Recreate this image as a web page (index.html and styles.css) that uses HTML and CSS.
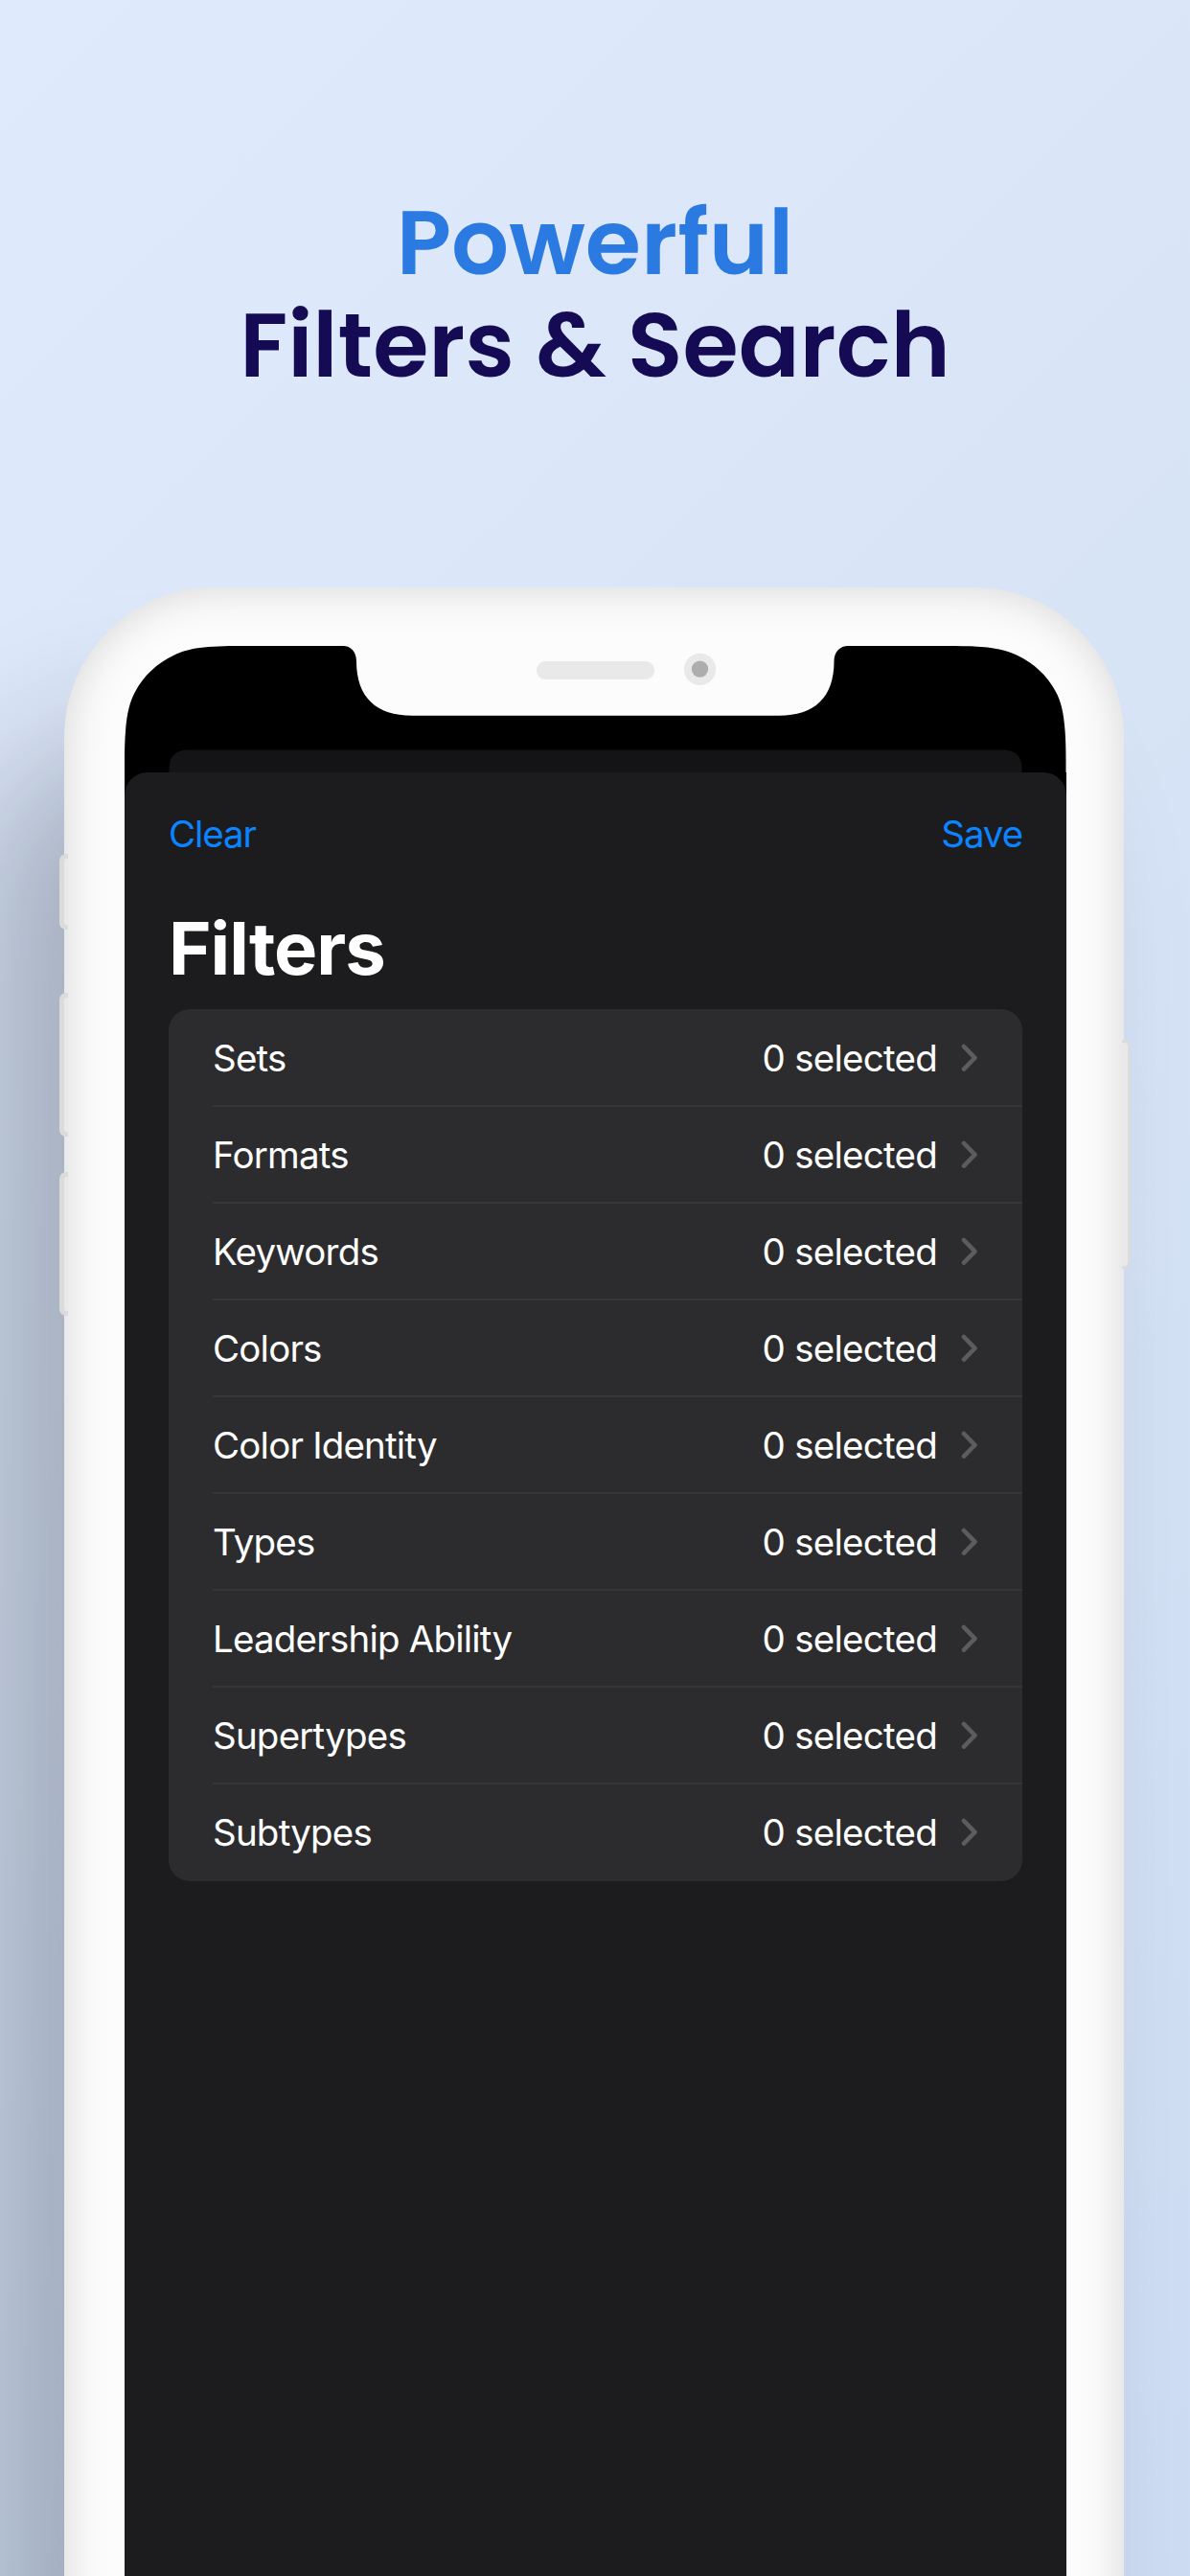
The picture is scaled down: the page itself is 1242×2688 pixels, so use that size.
FILE: index.html
```html
<!DOCTYPE html>
<html lang="en">
<head>
<meta charset="utf-8">
<title>Powerful Filters &amp; Search</title>
<link rel="stylesheet" href="styles.css">
</head>
<body>
<svg width="0" height="0" class="defs" aria-hidden="true">
  <symbol id="chevron" viewBox="0 0 18 30"><path d="M3 3 L14.5 14.8 L3 26.6" fill="none" stroke="currentColor" stroke-width="4.6" stroke-linecap="round" stroke-linejoin="round"/></symbol>
</svg>
<main class="poster">
  <h1 class="headline">
    <span class="headline-accent">Powerful</span>
    <span class="headline-main">Filters &amp; Search</span>
  </h1>
  <section class="phone">
    <i class="key key-mute"></i>
    <i class="key key-up"></i>
    <i class="key key-down"></i>
    <i class="key key-power"></i>
    <div class="screen">
      <svg class="status" viewBox="130 674 982.5 132" aria-hidden="true">
        <path d="M130 806 V794 C130 752 134 735 141 722 C150 705 164 692 181 684 C197 676 214 674 254 674 H358 C366 674 372 680 372 690 C372 728 393 746.7 430 746.7 H813 C850 746.7 870.5 728 870.5 690 C870.5 680 877 674 885 674 H989 C1029 674 1046 676 1062 684 C1079 692 1093 705 1102 722 C1109 735 1112.5 752 1112.5 794 V806 Z"/>
        <path d="M176.500 806 V802 C176.500 789 183 782.500 197 782.500 H1046 C1060 782.500 1066.500 789 1066.500 802 V806 Z" fill="#141416"/>
        <rect x="560" y="690" width="123" height="19" rx="9" fill="#e9e9e9"/>
        <circle cx="730.500" cy="698.300" r="16.600" fill="#e9e9e9"/>
        <circle cx="730.500" cy="698.100" r="8.700" fill="#adadad"/>
      </svg>
      <div class="sheet-wrap">
        <div class="sheet">
          <nav class="toolbar"><a>Clear</a><a>Save</a></nav>
          <h2 class="title">Filters</h2>
          <ul class="list">
            <li class="row"><span class="name">Sets</span><span class="value">0 selected</span><svg class="chevron"><use href="#chevron"/></svg></li>
            <li class="row"><span class="name">Formats</span><span class="value">0 selected</span><svg class="chevron"><use href="#chevron"/></svg></li>
            <li class="row"><span class="name">Keywords</span><span class="value">0 selected</span><svg class="chevron"><use href="#chevron"/></svg></li>
            <li class="row"><span class="name">Colors</span><span class="value">0 selected</span><svg class="chevron"><use href="#chevron"/></svg></li>
            <li class="row"><span class="name">Color Identity</span><span class="value">0 selected</span><svg class="chevron"><use href="#chevron"/></svg></li>
            <li class="row"><span class="name">Types</span><span class="value">0 selected</span><svg class="chevron"><use href="#chevron"/></svg></li>
            <li class="row"><span class="name">Leadership Ability</span><span class="value">0 selected</span><svg class="chevron"><use href="#chevron"/></svg></li>
            <li class="row"><span class="name">Supertypes</span><span class="value">0 selected</span><svg class="chevron"><use href="#chevron"/></svg></li>
            <li class="row"><span class="name">Subtypes</span><span class="value">0 selected</span><svg class="chevron"><use href="#chevron"/></svg></li>
          </ul>
        </div>
      </div>
    </div>
  </section>
</main>
</body>
</html>
```

FILE: styles.css
```css
* { box-sizing: border-box; }

body {
  margin: 0;
  font-family: Inter, "Liberation Sans", sans-serif;
}

.defs { display: block; }

.poster {
  display: flex;
  flex-direction: column;
  width: 1242px;
  height: 2688px;
  overflow: hidden;
  background: linear-gradient(135deg, #e0eafd 0%, #dae6f7 33%, #cddcf3 100%);
}

.headline {
  display: flex;
  flex: none;
  flex-direction: column;
  align-items: center;
  height: 613px;
  margin: 0;
  padding-top: 200px;
  font-family: Poppins, Inter, sans-serif;
  font-size: 94.3px;
  font-weight: 600;
  line-height: 107px;
}

.headline-accent { color: #2b7ae2; }
.headline-main { color: #150b55; }

.phone {
  position: relative;
  flex: none;
  width: 1106px;
  height: 2300px;
  margin-left: 67px;
  padding: 61px 0 0 63px;
  border-radius: 156px;
  background: #fcfcfc;
  box-shadow:
    inset 0 0 46px 2px rgba(0, 0, 0, .15),
    -90px 160px 150px rgba(24, 26, 36, .27);
}

.key {
  position: absolute;
  left: -5px;
  width: 9px;
  border: 5px solid #dbdbdb;
  border-right: 0;
  border-radius: 7px 0 0 7px;
  background: #e9e9e9;
}
.key-mute { top: 278px; height: 79px; }
.key-up { top: 423px; height: 150px; }
.key-down { top: 610px; height: 150px; }
.key-power {
  top: 472px;
  left: 1104px;
  height: 239px;
  border: 3px solid #dbdbdb;
  border-left: 0;
  border-radius: 0 7px 7px 0;
}

.screen { width: 982.5px; }

.status {
  display: block;
  width: 982.5px;
  height: 132px;
}

.sheet-wrap { background: #000; }

.sheet {
  height: 1900px;
  padding: 0 45.5px 0 46px;
  border-radius: 24px 24px 0 0;
  background: #1c1c1e;
}

.toolbar {
  display: flex;
  justify-content: space-between;
  padding-top: 40px;
  color: #0a84ff;
  font-size: 38.5px;
  line-height: 48px;
  letter-spacing: -1.1px;
}

.title {
  margin: 0;
  padding: 50px 0 19px;
  color: #fff;
  font-size: 76px;
  font-weight: 700;
  line-height: 90px;
  letter-spacing: -1px;
}

.list {
  margin: 0;
  padding: 1px 0 0;
  border-radius: 22px;
  background: #2c2c2e;
  list-style: none;
}

.row {
  display: flex;
  align-items: center;
  height: 101px;
  margin-left: 46px;
  padding-right: 46px;
  border-bottom: 2px solid #363638;
  color: #fff;
  font-size: 38.5px;
  letter-spacing: -.8px;
}
.row:last-child { border-bottom-color: transparent; }

.value {
  margin-left: auto;
  letter-spacing: -.75px;
}

.chevron {
  width: 18px;
  height: 30px;
  margin-left: 25px;
  color: #5c5c5f;
}
```
